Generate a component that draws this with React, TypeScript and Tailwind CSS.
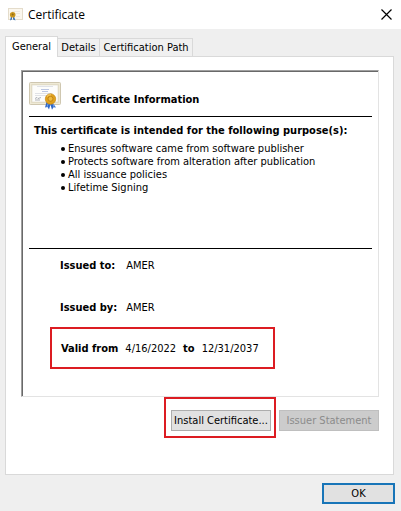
import * as React from "react";

const purposes = [
  "Ensures software came from software publisher",
  "Protects software from alteration after publication",
  "All issuance policies",
  "Lifetime Signing",
];

interface IconProps {
  className?: string;
}

const CertificateIcon: React.FC<IconProps> = ({ className }) => (
  <svg viewBox="0 0 32 28" className={className} aria-hidden="true">
    <rect x="0.5" y="0.5" width="31" height="22" rx="1" fill="#e6dfc8" stroke="#cfc7b0" />
    <rect x="1.5" y="1.5" width="29" height="20" fill="none" stroke="#f8f4e5" strokeDasharray="1 1" />
    <rect x="3" y="3" width="26" height="17" fill="#fdfdfb" stroke="#d8d2c0" strokeWidth="0.5" />
    <path d="M8 4.5h16M6 11.5h17M6 13.5h15" stroke="#d3d6dc" strokeWidth="0.7" />
    <path d="M12 7.5h8M13 9.5h6" stroke="#a9b8dc" strokeWidth="0.8" />
    <path d="M6 16.5l2-1 1 1 3-1M6 18h5" stroke="#8b909c" strokeWidth="0.7" fill="none" />
    <path d="M17.500 20l-1.500 5.500 2.500-.5 1.500 2.500 2-6.500zM23 20l4 5.500-2.500-.3-1.500 2.500-2-6.500z" fill="#2f68c8" />
    <path d="M19 22l-1 3M24 22l1 3" stroke="#7fa9ee" strokeWidth="0.8" />
    <circle cx="21.500" cy="17" r="5.200" fill="#e0a11b" stroke="#c98a14" strokeWidth="0.7" />
    <circle cx="21.500" cy="16.800" r="2.500" fill="#eeb93c" stroke="#b87a12" strokeWidth="0.8" />
    <path d="M18 14.500q1.500-2 4-1.700" stroke="#ffe08a" fill="none" strokeWidth="0.8" />
  </svg>
);

const SmallCertificateIcon: React.FC<IconProps> = ({ className }) => (
  <svg viewBox="0 0 15 13" className={className} aria-hidden="true">
    <rect x="0.5" y="0.5" width="14" height="11" fill="#fbf7ee" stroke="#e4dccb" />
    <path d="M4 3.500h8M8 5.500h4M8 8.500h4" stroke="#e6e1d8" strokeWidth="0.7" />
    <path d="M3 8.500l-1 4 2-1 0-3zM6 8.500l1.500 4-2.500-1v-3z" fill="#3973b8" />
    <circle cx="4.700" cy="6.800" r="2.800" fill="#c9961c" />
    <circle cx="4.700" cy="6.500" r="1" fill="#8f6a17" />
  </svg>
);

export default function App() {
  return (
    <div
      role="dialog"
      aria-labelledby="dialog-title"
      className="bg-[#efefef] pb-[7px] font-['DejaVu_Sans_Condensed','DejaVu_Sans',sans-serif] text-[11px] leading-[13px] text-black"
    >
      <header className="flex h-[29px] items-center bg-white pr-[9px] pl-2">
        <SmallCertificateIcon className="h-[13px] w-[15px]" />
        <h1
          id="dialog-title"
          className="ml-[5px] font-['Open_Sans',sans-serif] text-xs"
        >
          Certificate
        </h1>
        <button type="button" aria-label="Close" className="ml-auto">
          <svg viewBox="0 0 11 11" className="h-[11px] w-[11px]">
            <path d="M0.500 0.500l10 10M10.500 0.500l-10 10" stroke="#000" strokeWidth="1.200" />
          </svg>
        </button>
      </header>

      <main className="mr-[7px] ml-[5px] pt-[7px]">
        <div role="tablist" className="flex items-end">
          <button
            type="button"
            role="tab"
            aria-selected="true"
            className="z-10 -mb-px h-[21px] w-[53px] border border-b-0 border-[#d9d9d9] bg-white pb-[2px]"
          >
            General
          </button>
          <button
            type="button"
            role="tab"
            aria-selected="false"
            className="h-[18px] w-[42px] border-t border-r border-[#d9d9d9] bg-[#f0f0f0]"
          >
            Details
          </button>
          <button
            type="button"
            role="tab"
            aria-selected="false"
            className="h-[18px] w-[93px] border-t border-r border-[#d9d9d9] bg-[#f0f0f0]"
          >
            Certification Path
          </button>
        </div>

        <section
          role="tabpanel"
          className="border border-[#d9d9d9] bg-white pt-[13px] pr-[14px] pb-[43px] pl-[15px]"
        >
          <div className="border border-t-[#a0a0a0] border-r-[#e3e3e3] border-b-[#e3e3e3] border-l-[#a0a0a0]">
            <div className="border-t border-l border-[#696969] px-[6px] pt-[10px] pb-[27px]">
              <div className="flex h-[35px] border-b border-black">
                <CertificateIcon className="h-7 w-8" />
                <h2 className="mt-[11px] ml-[11px] font-bold">
                  Certificate Information
                </h2>
              </div>

              <div className="h-[132px] border-b border-black pt-[7px]">
                <h3 className="ml-[5px] font-bold">
                  This certificate is intended for the following purpose(s):
                </h3>
                <ul className="mt-[5px] ml-[32px]">
                  {purposes.map((purpose) => (
                    <li key={purpose} className="flex items-center gap-[3px]">
                      <span className="h-1 w-1 rounded-full bg-black" />
                      {purpose}
                    </li>
                  ))}
                </ul>
              </div>

              <dl className="pt-[10px]">
                <div className="ml-[31px] flex gap-[11px]">
                  <dt className="font-bold">Issued to:</dt>
                  <dd>AMER</dd>
                </div>
                <div className="mt-[29px] ml-[31px] flex gap-[9px]">
                  <dt className="font-bold">Issued by:</dt>
                  <dd>AMER</dd>
                </div>
                <div className="mt-[13px] ml-[21px] flex h-[42px] w-[225px] items-center gap-[7px] border-2 border-[#dc1c22] pl-[9px]">
                  <dt className="font-bold">Valid from</dt>
                  <dd>4/16/2022</dd>
                  <dt className="font-bold">to</dt>
                  <dd>12/31/2037</dd>
                </div>
              </dl>
            </div>
          </div>

          <div className="mt-[13px] flex justify-end gap-2">
            <div className="relative">
              <button
                type="button"
                className="h-[21px] w-[100px] border border-[#adadad] bg-[#e1e1e1]"
              >
                Install Certificate...
              </button>
              <span className="pointer-events-none absolute -top-[13px] -right-[5px] -bottom-[7px] -left-[7px] border-2 border-[#dc1c22]" />
            </div>
            <button
              type="button"
              disabled
              className="h-[21px] w-[100px] border border-[#bfbfbf] bg-[#cccccc] text-[#8b8b8b]"
            >
              Issuer Statement
            </button>
          </div>
        </section>
      </main>

      <footer className="mt-2 mr-[6px] flex justify-end">
        <button
          type="button"
          className="h-[21px] w-[73px] border-2 border-[#1875b8] bg-[#e1e1e1]"
        >
          OK
        </button>
      </footer>
    </div>
  );
}
